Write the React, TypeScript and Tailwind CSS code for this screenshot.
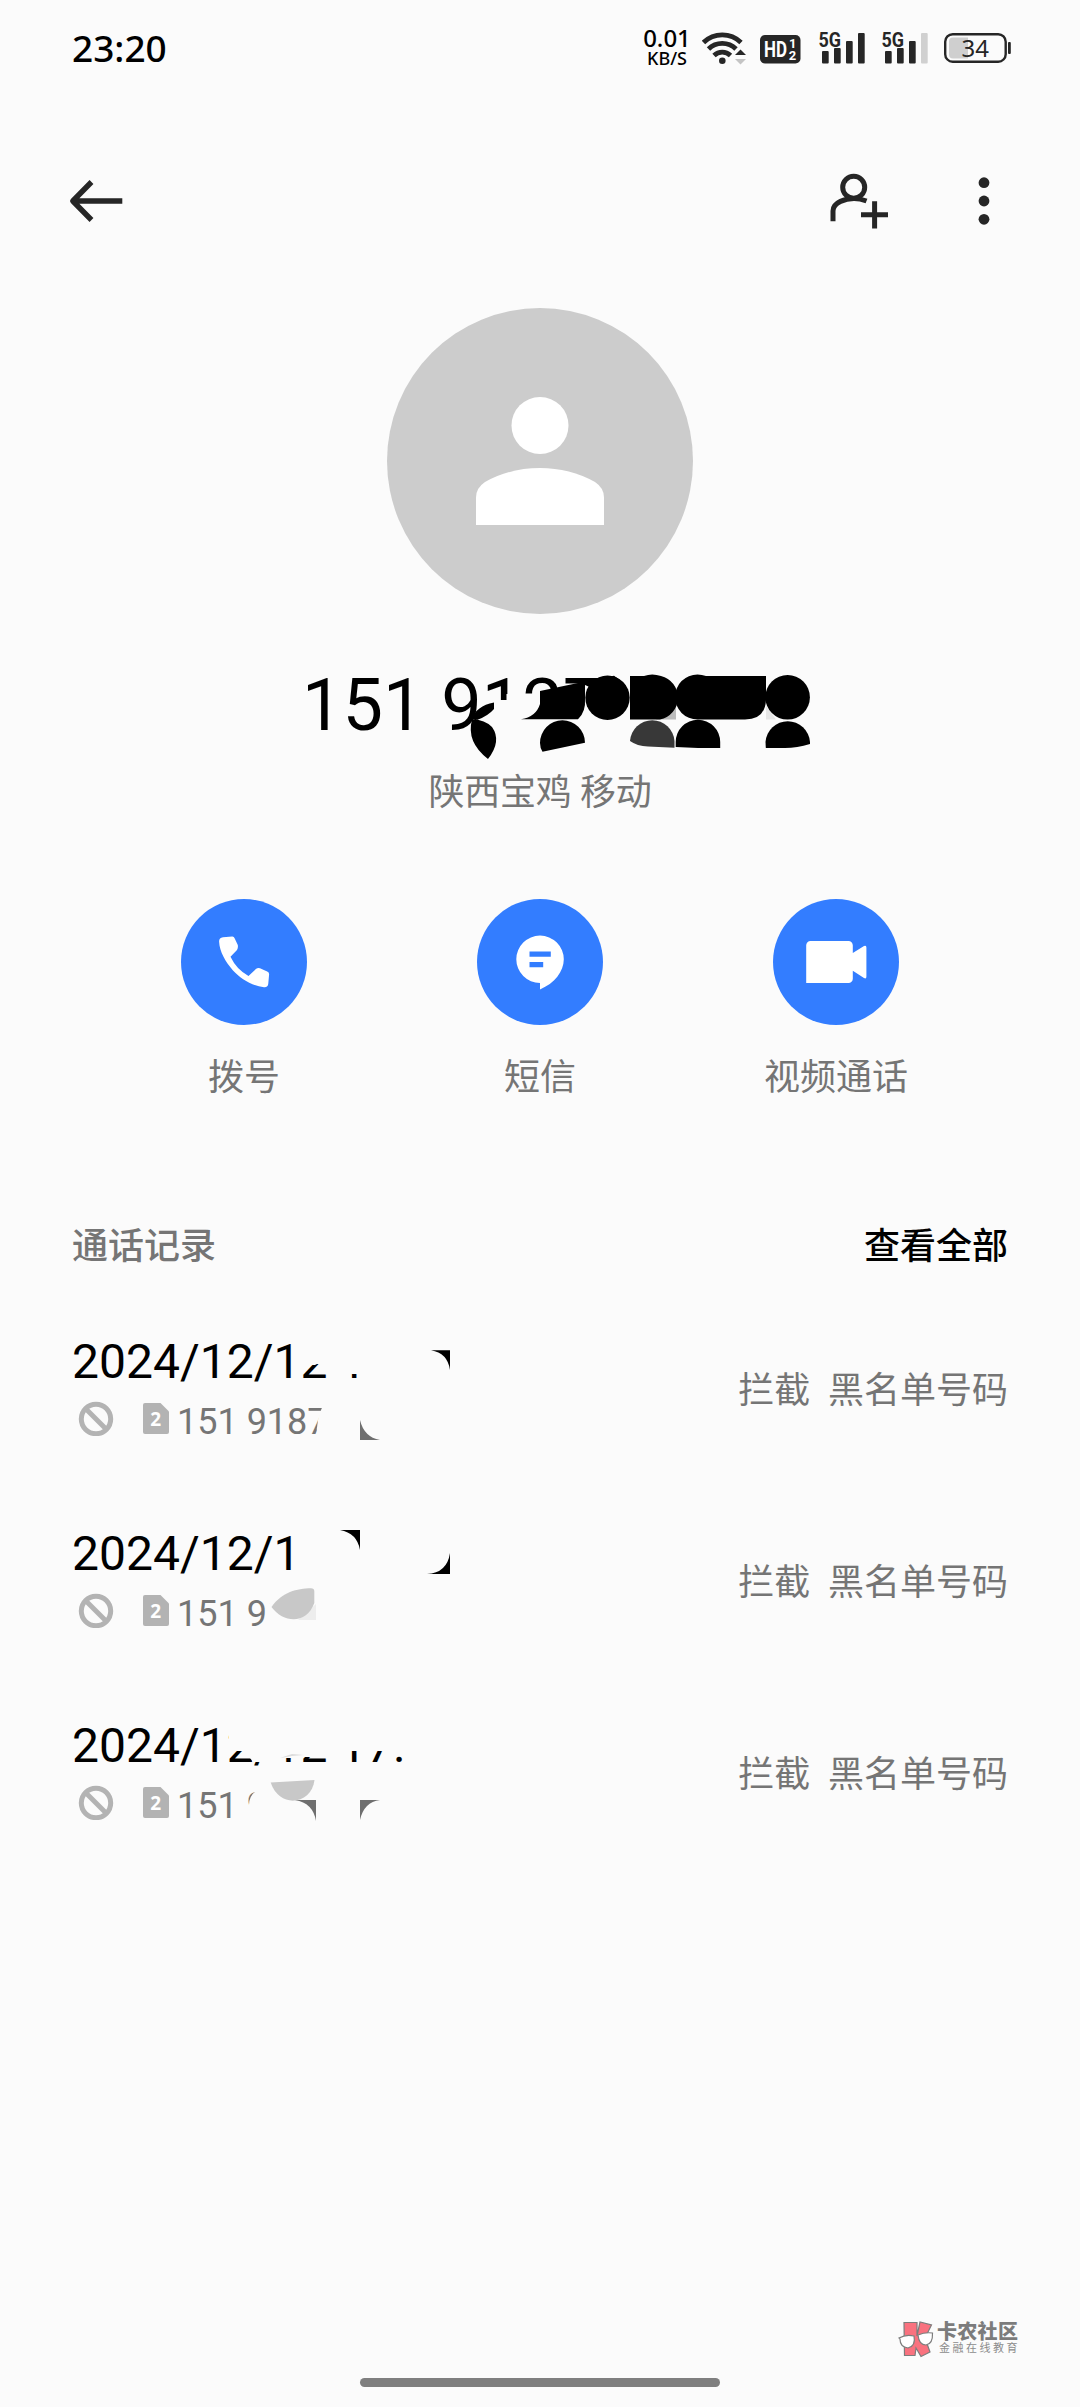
import type { ReactNode } from "react";

const INK = "#262626";
const BG = "#fbfbfb";

const ACTIONS: { key: string; label: string; icon: ReactNode }[] = [
    {
        key: "call",
        label: "拨号",
        icon: (
            <path d="M38.1 42.5Q38 38.8 42 38.3L51.2 37.6Q53 37.5 53.6 39.3L56.8 46Q57.3 48.5 56 51L49.5 57.8Q55.5 70.5 67.5 77L75.2 69.8Q76.8 68.4 79 69.2L86.2 72.4Q88.3 73.3 88.1 75.6L87.3 84.5Q87 88.6 83 88.3C70 86.5 59.5 79.5 52 71.5C44.5 62.5 38.6 53 38.1 42.5Z" />
        ),
    },
    {
        key: "sms",
        label: "短信",
        icon: (
            <path
                fillRule="evenodd"
                d="M63 36.6A23.7 23.7 0 0 0 63 84V90.4C77.5 84.5 86.8 72.5 86.8 60.3A23.7 23.7 0 0 0 63 36.6ZM52.5 52.6H73.8V57.8H52.5ZM52.5 63H66.2V68.2H52.5Z"
            />
        ),
    },
    {
        key: "video",
        label: "视频通话",
        icon: (
            <path d="M37.5 42H75.5A4.3 4.3 0 0 1 79.8 46.3V54L91 47Q93.4 45.8 93.4 48.5V77.5Q93.4 80.3 91 79L79.8 71.8V79.7A4.3 4.3 0 0 1 75.5 84H33.2V46.3A4.3 4.3 0 0 1 37.5 42Z" />
        ),
    },
];

// Each mask is drawn over its record; every row is 192px tall
const RECORDS: { date: string; number: string; mask: ReactNode }[] = [
    {
        date: "2024/12/12 1",
        number: "151 9187",
        mask: (
            <>
                <path fill={BG} d="M301 15H364V54H345V44H317L315 45H301Z" />
                <path fill={BG} d="M330 80V119H317Q315 98 326 80Z" />
                <path fill="#000" d="M431 30.3H450V50Q447.5 33 431 30.3Z" />
                <path fill="#6f6f6f" d="M360 100V120H380Q364 117 360 100Z" />
            </>
        ),
    },
    {
        date: "2024/12/1",
        number: "151 91",
        mask: (
            <>
                <path fill={BG} d="M272 80H300V118H268V96Z" />
                <path fill="#000" d="M340 18H360V38Q357 21 340 18Z" />
                <path fill="#000" d="M450 41V62H427Q447 61 450 41Z" />
                <path fill="#ededed" d="M316 92V108H298Z" />
                <path fill="#c8c8c8" d="M271.5 95C282 80 297 76.5 311 76.3Q314.3 76.3 314.3 79.5V91C307 112 284 112 271.5 95Z" />
            </>
        ),
    },
    {
        date: "2024/12/12 17:",
        number: "151 9",
        mask: (
            <>
                <path fill={BG} d="M229 15H430V47H345V53H330V53H303V54H280V61H268V58H253L250 54L242 47H229Z" />
                <path fill={BG} d="M256 68H276V118H243V101L249 101Q249 92 256 87Z" />
                <path fill="#dcdcdc" d="M280 54L292 50L304 51L292 52Z" />
                <path fill="#c8c8c8" d="M270.7 78.6L314.5 76C312 100 280 106 270.7 78.6Z" />
                <path fill="#6f6f6f" d="M295 96H316V117Q313 99 295 96Z" />
                <path fill="#6f6f6f" d="M360 96H380Q364 98 360 116Z" />
            </>
        ),
    },
];

function Signal({ weak }: { weak?: boolean }) {
    return (
        <svg className="overflow-visible" width="48" height="36" viewBox="0 0 48 36" fill={INK}>
            <text x="-0.5" y="16.5" fontSize="21" fontWeight="700" textLength="22.5" lengthAdjust="spacingAndGlyphs">5G</text>
            <rect x="3" y="21" width="6.7" height="12.5" rx="1" />
            <rect x="15" y="18" width="6.7" height="15.5" rx="1" />
            <rect x="27" y="11" width="6.7" height="22.5" rx="1" />
            <rect x="39" y="3" width="6.7" height="30.5" rx="1" fill={weak ? "#d0d0d0" : INK} />
        </svg>
    );
}

function StatusBar() {
    return (
        <div className="flex h-24 items-center justify-between pl-[72px] pr-[68px]">
            <span className="pb-[2px] font-['Noto_Sans'] text-[37px] font-medium leading-none text-black">23:20</span>
            <div className="flex items-center">
                <div className="mr-[10px] flex w-[50px] flex-col items-center font-['Noto_Sans'] font-medium text-black">
                    <span className="text-[24px] leading-[18px]">0.01</span>
                    <span className="pt-[2px] text-[18px] leading-[18px]">KB/S</span>
                </div>
                {/* wifi */}
                <svg width="44" height="36" viewBox="0 0 44 36" fill="none" stroke={INK} strokeWidth="4.8">
                    <path d="M1.5 12.5A27 27 0 0 1 39 12.5" />
                    <path d="M6.5 19A19.5 19.5 0 0 1 34 19" />
                    <path d="M12 25.5A12 12 0 0 1 28.5 25.5" />
                    <circle cx="20.3" cy="30.8" r="3.3" fill={INK} stroke="none" />
                    <path d="M33 25L38.5 19.5L44 25Z" fill={INK} stroke="none" />
                    <path d="M33 29H44L38.5 34.5Z" fill="#c4c4c4" stroke="none" />
                </svg>
                {/* HD badge */}
                <svg className="ml-[14px]" width="41" height="36" viewBox="0 0 41 36">
                    <rect x="0" y="5" width="40.5" height="28.5" rx="5" fill={INK} />
                    <g fill="#fff" fontWeight="700">
                        <text x="4" y="27.2" fontSize="22" textLength="23" lengthAdjust="spacingAndGlyphs">HD</text>
                        <text x="29" y="17.8" fontSize="13">1</text>
                        <text x="28.8" y="30.4" fontSize="13">2</text>
                    </g>
                </svg>
                <div className="ml-[18px] flex gap-[15px]">
                    <Signal />
                    <Signal weak />
                </div>
                {/* battery */}
                <svg className="ml-[14px]" width="68" height="36" viewBox="0 0 68 36">
                    <rect x="1.2" y="4.2" width="60.5" height="27.5" rx="7.5" fill="none" stroke={INK} strokeWidth="2.4" />
                    <path d="M9 7.5H24V28.5H9A4 4 0 0 1 5 24.5V11.5A4 4 0 0 1 9 7.5Z" fill="#cfcfcf" />
                    <rect x="64" y="12" width="2.8" height="12" rx="1" fill={INK} />
                    <text x="17.5" y="26.8" fontSize="24" fontFamily="Noto Sans, sans-serif" fill={INK}>34</text>
                </svg>
            </div>
        </div>
    );
}

function Toolbar() {
    return (
        <header className="flex h-[210px] items-start justify-between pl-[68px] pr-[72px] pt-[70px]">
            <svg width="60" height="70" viewBox="0 0 60 70" fill="none" stroke={INK} strokeWidth="5.4">
                <path d="M5 35H54.3M23.5 16L4.8 35L23.5 54" strokeLinejoin="round" />
            </svg>
            <div className="flex gap-[60px]">
                <svg width="60" height="70" viewBox="828 166 60 70" fill="none" stroke={INK} strokeWidth="5">
                    <circle cx="853.7" cy="187.3" r="11" />
                    <path d="M833 221.2V211C833 202 846 198.5 854 198.5Q860 198.5 866.5 201" />
                    <path d="M861 214.8H888M874.6 201.3V228.5" />
                </svg>
                <svg width="60" height="70" viewBox="948 166 60 70" fill={INK}>
                    <circle cx="984" cy="182.7" r="5.4" />
                    <circle cx="984" cy="201" r="5.4" />
                    <circle cx="984" cy="219.3" r="5.4" />
                </svg>
            </div>
        </header>
    );
}

function Profile() {
    return (
        <section className="flex flex-col items-center pt-[2px]">
            <svg width="306" height="306" viewBox="0 0 306 306">
                <circle cx="153" cy="153" r="153" fill="#cccccc" />
                <circle cx="153" cy="117.5" r="28.5" fill="#fff" />
                <path fill="#fff" d="M89 217V189.5Q89 180 98 174Q123 160 153 160T208 174Q217 180 217 189.5V217Z" />
            </svg>

            <div className="relative mt-[49px] h-[84px] w-full pl-[302px] pt-[1px]">
                <h1 className="text-[72px] leading-[84px] text-black">151 9127</h1>
                {/* smudged digits */}
                <svg className="absolute left-[460px] top-[7px]" width="360" height="95" viewBox="460 674 360 95">
                    <g fill={BG} transform="translate(0 4)">
                        <path d="M494 700H506.5V694H541V735H494Z" />
                        <path d="M553 690L564 684H595V735H541V695Z" />
                        <path d="M479 722L492 712V735H479Z" />
                    </g>
                    <g transform="translate(0 4)">
                        <path d="M472 719Q476 706 494 702.5V709Q488 716 477 720ZM472 719.5Q466 742 488 759Q502 741 492 727Q484 719 472 719.5Z" />
                        <path d="M521 719.3Q536 717 540 704V691L585 681.5V698Q586 712 578 719.3Z" />
                        <path d="M540 743A22.3 22.3 0 0 1 585 742.7L542.5 751.7Q540 748 540 743Z" />
                        <circle cx="607.5" cy="697.8" r="22.2" />
                        <path d="M584 684.5V682L614 675.8L620 680L596 690Z" />
                        <path fill="#bcbcbc" d="M676 702V719.5H656Z" />
                        <path d="M630 676H644Q652 673 661 676A22.3 22.3 0 0 1 660 719.5H630Z" />
                        <path fill="#383838" d="M630 741A22.3 22.3 0 0 1 674.5 741V747.7L648 746.5Q637 746 630 741Z" />
                        <path d="M697.5 674.5Q702 674.5 706 676H766V700Q765 719.5 745 719.5H697.5A22.3 22.3 0 0 1 697.5 674.5Z" />
                        <path d="M675.7 742A22.2 22.2 0 0 1 720.2 742V748H698L675.7 747Z" />
                        <path fill="#e6e6e6" d="M766 706V719.5H776Z" />
                        <circle cx="787.6" cy="697.3" r="22.3" />
                        <path d="M765.5 742A22.3 22.3 0 0 1 810 742V744Q797 748 785 748H765.8Z" />
                    </g>
                </svg>
            </div>

            <p className="mt-[19px] text-[36px] leading-[54px] tracking-[-0.3px] text-[#757575]">陕西宝鸡 移动</p>
        </section>
    );
}

function Watermark() {
    return (
        <div className="flex h-9 items-center justify-end gap-[3px] pr-[60px]">
            <svg width="36" height="37" viewBox="0 0 36 37" stroke="#7d7d7d" strokeWidth="1.2">
                <path fill="#f9727f" d="M6 1.5H19V15L22 1L33.5 4L27 17L32 31L23 35.5L18 27L17 34.5H6.5Z" />
                <path fill="#fff" d="M1 17Q8 13 16 15Q18 25 10 27Q2 26 2 18ZM20 14Q27 11 34.5 12Q35 23 28 24Q21 24 20 14Z" />
            </svg>
            <div className="flex flex-col">
                <span className="text-[20px] font-black leading-[20px] tracking-[0.3px] text-[#7c7c7c]">卡农社区</span>
                <span className="pl-[2px] text-[11px] leading-[14px] tracking-[2.5px] text-[#8c8c8c]">金融在线教育</span>
            </div>
        </div>
    );
}

export default function App() {
    return (
        <div className="flex h-[2407px] w-[1080px] flex-col overflow-hidden bg-[#fbfbfb] font-[Roboto,'Noto_Sans_CJK_SC',sans-serif]">
            <StatusBar />
            <Toolbar />
            <Profile />

            {/* Quick actions */}
            <div className="mt-[79px] flex justify-center gap-[96px]">
                {ACTIONS.map((action) => (
                    <button key={action.key} className="flex w-[200px] flex-col items-center">
                        <span className="h-[126px] w-[126px] rounded-full bg-[#337dff]">
                            <svg width="126" height="126" viewBox="0 0 126 126" fill="#fff">
                                {action.icon}
                            </svg>
                        </span>
                        <span className="mt-[26px] text-[36px] leading-[54px] text-[#757575]">{action.label}</span>
                    </button>
                ))}
            </div>

            {/* Call log */}
            <div className="mt-[115px] flex items-center justify-between px-[72px] text-[36px] font-medium leading-[54px]">
                <h2 className="text-[#757575]">通话记录</h2>
                <button className="text-black">查看全部</button>
            </div>
            <ul className="mt-[46px]">
                {RECORDS.map((record) => (
                    <li key={record.date} className="relative flex h-[192px] items-start justify-between px-[72px]">
                        <div className="pt-[14px]">
                            <p className="text-[48px] leading-[56px] text-black">{record.date}</p>
                            <div className="mt-[6px] flex h-[44px] items-center pl-[6px]">
                                <svg width="36" height="36" viewBox="0 0 36 36" fill="none" stroke="#b3b3b3" strokeWidth="5">
                                    <circle cx="18" cy="19" r="14.7" />
                                    <path d="M8 9L28 29" />
                                </svg>
                                <svg className="ml-[29px]" width="26" height="32" viewBox="0 0 26 32">
                                    <path fill="#b3b3b3" d="M2 1H17.5L26 9.5V30Q26 32 24 32H2Q0 32 0 30V3Q0 1 2 1Z" />
                                    <text x="7.3" y="24" fontSize="19" fontWeight="700" fontFamily="Noto Sans, sans-serif" fill="#fff">2</text>
                                </svg>
                                <span className="ml-[8px] pt-[7px] text-[36px] leading-[44px] text-[#757575]">{record.number}</span>
                            </div>
                        </div>
                        <p className="whitespace-pre pt-[44px] text-[36px] leading-[54px] text-[#757575]">拦截  黑名单号码</p>
                        <svg className="absolute left-0 top-0" width="500" height="130" viewBox="0 0 500 130">
                            {record.mask}
                        </svg>
                    </li>
                ))}
            </ul>

            <div className="mt-auto">
                <Watermark />
                <div className="mx-auto mb-[20px] mt-[21px] h-[9px] w-[360px] rounded-full bg-[#7f7f7f]" />
            </div>
        </div>
    );
}
